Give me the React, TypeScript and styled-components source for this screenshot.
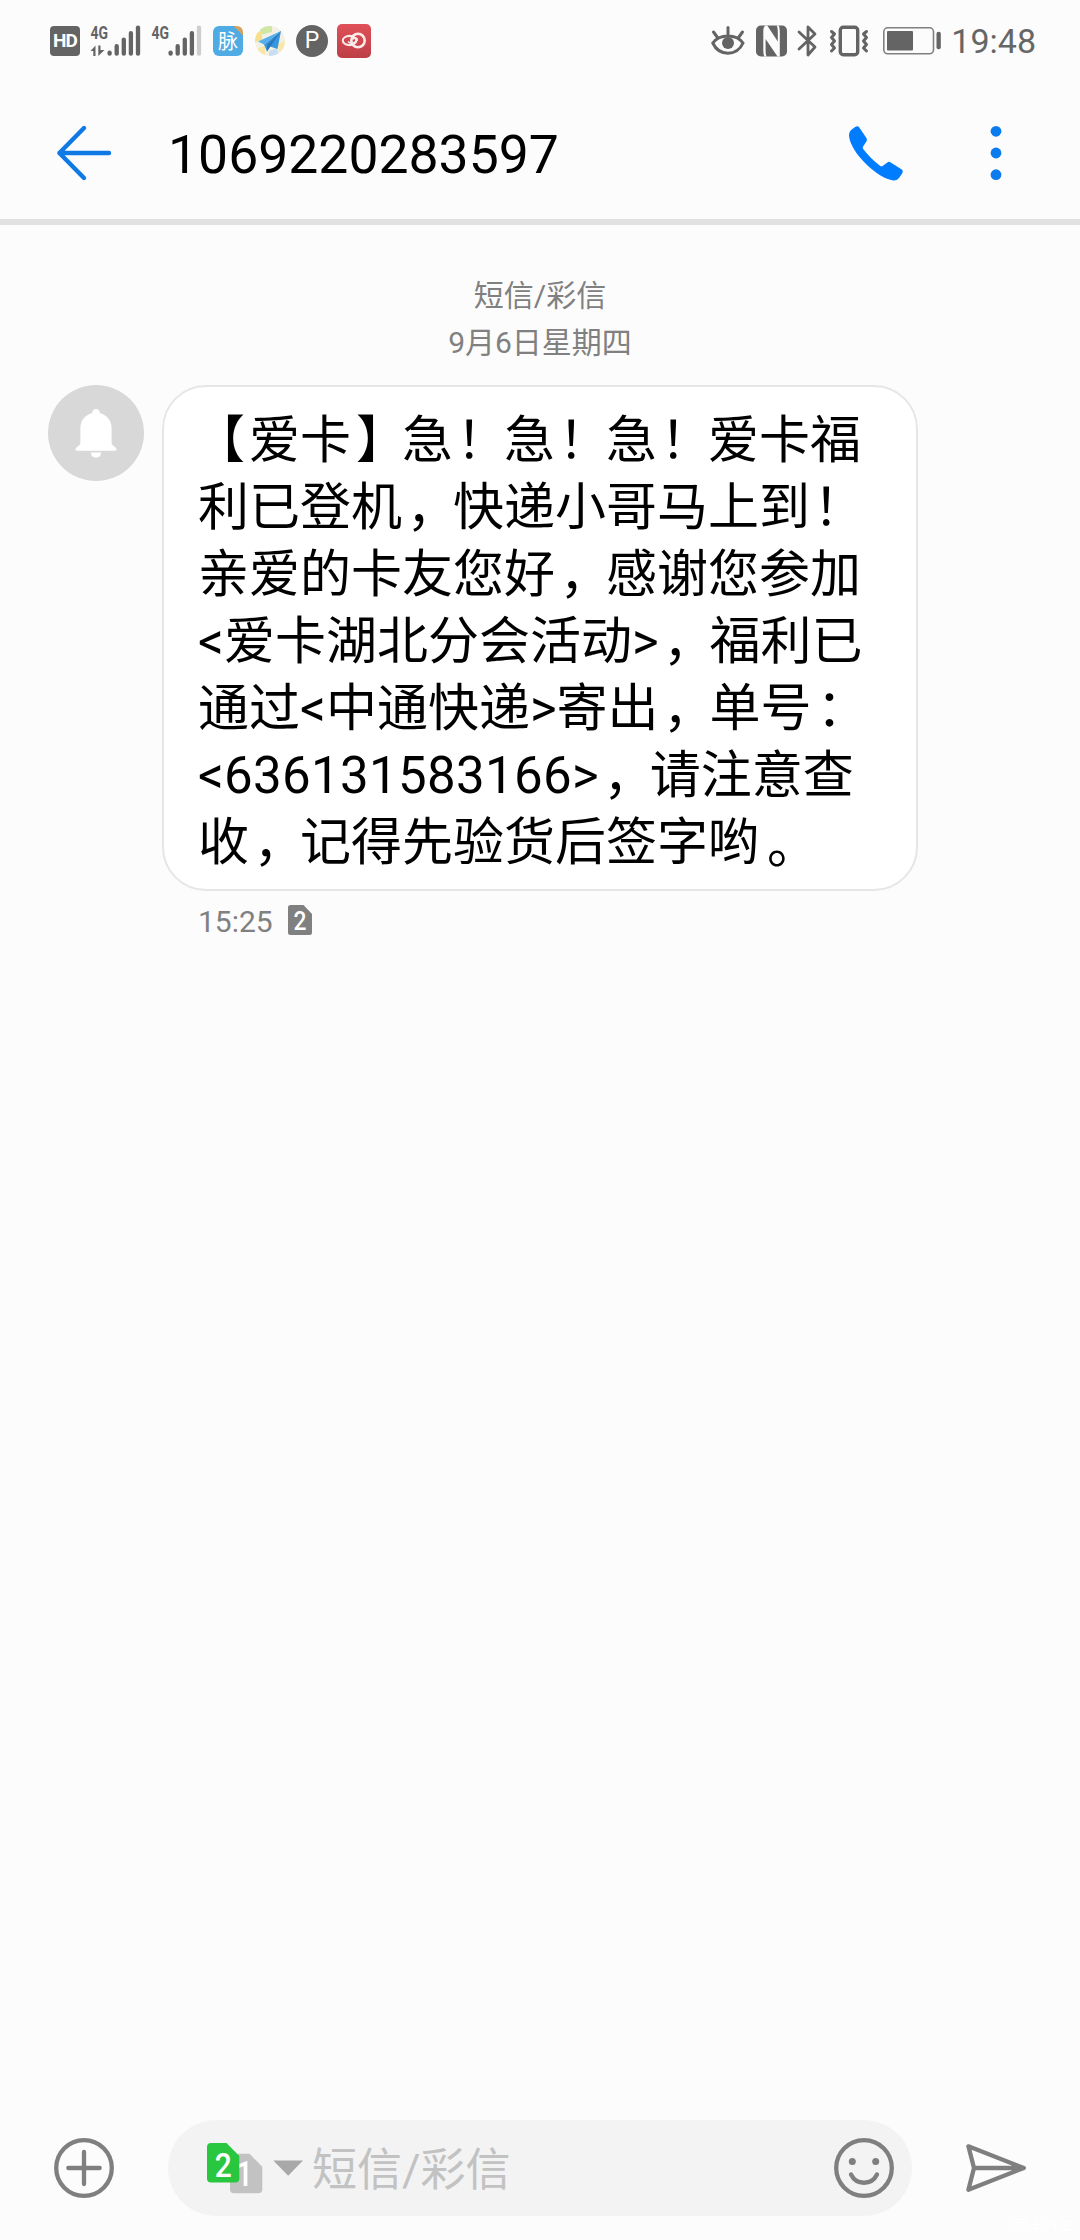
import React from 'react';
import styled, { createGlobalStyle } from 'styled-components';

const GREY = '#646464';
const MID = '#7f7f7f';
const BLUE = '#007dff';
const FONT = `Roboto, "Noto Sans CJK SC", sans-serif`;

const GlobalStyle = createGlobalStyle`
  * { box-sizing: border-box; }
  body { margin: 0; background: #fcfcfc; }
  svg { display: block; flex: none; overflow: visible; }
`;

const Screen = styled.div`
  display: flex;
  flex-direction: column;
  width: 1080px;
  height: 2240px;
  background: #fcfcfc;
  font-family: ${FONT};
  overflow: hidden;
`;

const StatusBar = styled.header`
  display: flex;
  align-items: center;
  justify-content: space-between;
  height: 82px;
  padding: 0 44px 0 50px;
`;

const StatusGroup = styled.div`
  display: flex;
  align-items: center;
`;

const Gap = styled.span<{ $w: number }>`
  flex: none;
  width: ${(p) => p.$w}px;
`;

const HdBadge = styled.span`
  display: flex;
  align-items: center;
  justify-content: center;
  width: 30px;
  height: 30px;
  border-radius: 4px;
  background: ${GREY};
  color: #fff;
  font: 700 19px/30px Roboto, sans-serif;
  letter-spacing: -0.8px;
`;

const AppBadge = styled.span`
  display: flex;
  align-items: center;
  justify-content: center;
  width: 30px;
  height: 30px;
  border-radius: 6px;
  background: linear-gradient(45deg, #4fabe4 84%, #d3a25f 84%);
  color: #fff;
  font: 400 20px/30px "Noto Sans CJK SC", sans-serif;
`;

const ParkingBadge = styled.span`
  display: flex;
  align-items: center;
  justify-content: center;
  width: 32px;
  height: 32px;
  border-radius: 50%;
  background: ${GREY};
  color: #fff;
  font: 400 23px/32px Roboto, sans-serif;
`;

const Clock = styled.span`
  color: #666;
  font: 400 34px/40px Roboto, sans-serif;
`;

const TitleBar = styled.div`
  display: flex;
  align-items: center;
  height: 143px;
  padding: 4px 78px 0 56px;
  border-bottom: 6px solid #e1e1e1;
`;

const Title = styled.h1`
  flex: 1;
  margin: 4px 0 0 56px;
  color: #000;
  font: 400 53.5px/64px Roboto, sans-serif;
`;

const Thread = styled.main`
  flex: 1;
  display: flex;
  flex-direction: column;
  padding-top: 47px;
`;

const Stamp = styled.div`
  color: #808080;
  text-align: center;
  font-size: 30px;
  line-height: 47px;
`;

const MessageRow = styled.div`
  display: flex;
  align-items: flex-start;
  gap: 18px;
  margin-top: 19px;
  padding-left: 48px;
`;

const Avatar = styled.div`
  display: flex;
  align-items: center;
  justify-content: center;
  width: 96px;
  height: 96px;
  border-radius: 50%;
  background: #d8d8d8;
`;

const Bubble = styled.div`
  width: 756px;
  height: 506px;
  padding: 20px 34px 0;
  border: 2px solid #e6e6e6;
  border-radius: 44px;
  background: #fff;
  color: #000;
  font-size: 51px;
  line-height: 67px;
  white-space: nowrap;
`;

const Line = styled.div`
  height: 67px;
`;

const Mark = styled.span<{ $x: number; $y: number }>`
  display: inline-block;
  width: 51px;
  text-spacing-trim: space-all;
  transform: translate(${(p) => p.$x}px, ${(p) => p.$y}px);
`;

const Digits = styled.span`
  letter-spacing: 0.35px;
`;

const Meta = styled.div`
  display: flex;
  align-items: center;
  gap: 15px;
  margin: 9px 0 0 198px;
  height: 40px;
  color: #808080;
  font: 400 30px/40px Roboto, sans-serif;
`;

const MetaTime = styled.span`
  padding-top: 3px;
`;

const Composer = styled.footer`
  display: flex;
  align-items: center;
  height: 96px;
  padding-left: 54px;
`;

const Field = styled.div`
  display: flex;
  align-items: center;
  width: 744px;
  height: 96px;
  margin-left: 54px;
  padding: 0 18px 0 39px;
  border-radius: 48px;
  background: #f3f3f3;
`;

const Placeholder = styled.span`
  flex: 1;
  margin-left: 9px;
  padding-top: 6px;
  color: #c2c2c2;
  font-size: 45px;
  line-height: 60px;
`;

const Footnote = styled.div`
  display: flex;
  justify-content: flex-end;
  height: 24px;
  padding-right: 7px;
  color: #fff;
  font-size: 15px;
  line-height: 20px;
`;

const svgText = { fontFamily: 'Roboto, sans-serif' };

function Signal({ data, weak }: { data?: boolean; weak?: boolean }) {
  const tops = [26, 19.5, 13, 6.5, 1];
  return (
    <svg width="51" height="32" viewBox="0 0 51 32">
      <text x="0.5" y="13.6" fontSize="18" fontWeight="700" fill={GREY} textLength="17.5" lengthAdjust="spacingAndGlyphs" {...svgText}>4G</text>
      {data && (
        <>
          <path d="M0.5 26 L5.5 20.5 V31 H3.3 V26Z" fill={GREY} />
          <path d="M8.3 20.5 H10.5 V25 H14.5 L8.3 31Z" fill={GREY} />
        </>
      )}
      {tops.map((t, i) => (
        <line key={t} x1={19.6 + i * 7.1} x2={19.6 + i * 7.1} y1={t + 1.6} y2={28.7}
          stroke={weak && i === 4 ? '#cecece' : GREY} strokeWidth="4.3" strokeLinecap="round" />
      ))}
    </svg>
  );
}

function PlaneIcon() {
  return (
    <svg width="30" height="30" viewBox="0 0 30 30">
      <defs><clipPath id="mapDisc"><circle cx="15" cy="15" r="15" /></clipPath></defs>
      <g clipPath="url(#mapDisc)">
        <rect width="30" height="30" fill="#f3f1e4" />
        <path d="M5 0H17V6L5 9Z" fill="#cfe6a4" />
        <path d="M0 7L7 5V14L0 16Z" fill="#f8df8b" />
        <path d="M14 25L22 22L24 30H14Z" fill="#c8def5" />
        <path d="M3 22L10 20V30H3Z" fill="#f8e7a8" />
        <path d="M23 18L30 15V24L24 26Z" fill="#f8e7a8" />
      </g>
      <path d="M26 5L3 15.5L9 18.5Z" fill="#58aeea" />
      <path d="M26 5L9 18.5L12 25.5L15 20.5L22.5 23Z" fill="#3896de" />
      <path d="M26 5L12 19L12 25.5Z" fill="#2679bd" />
    </svg>
  );
}

function RingsIcon() {
  return (
    <svg width="34" height="34" viewBox="0 0 34 34">
      <defs>
        <linearGradient id="redTile" x1="0" y1="0" x2="0" y2="1">
          <stop offset="0" stopColor="#e05058" /><stop offset="1" stopColor="#bd3f46" />
        </linearGradient>
      </defs>
      <rect width="34" height="34" rx="5" fill="url(#redTile)" />
      <g fill="none" stroke="#fbe9e9">
        <ellipse cx="12.5" cy="16.5" rx="6.7" ry="4.6" strokeWidth="2.1" />
        <circle cx="21" cy="16.5" r="6.7" strokeWidth="2.6" />
        <path d="M11 17.5C13 20 18 19.5 20 16.5C21.5 14 17 13 15.5 15.5" strokeWidth="1.6" />
      </g>
    </svg>
  );
}

function EyeIcon() {
  return (
    <svg width="34" height="32" viewBox="0 0 34 32" fill="none" stroke={GREY} strokeWidth="3" strokeLinecap="round">
      <path d="M1.8 18C8.500 8.500 25.500 8.500 32 18C26 31.500 8 31.500 1.8 18Z" />
      <circle cx="17" cy="18" r="6" fill={GREY} stroke="none" />
      <path d="M17 2.500V9M2.500 7L6.500 12.500M31.500 7L27.500 12.500" />
    </svg>
  );
}

function NfcIcon() {
  return (
    <svg width="31" height="32" viewBox="0 0 31 32">
      <rect y="0.5" width="31" height="31" rx="5" fill={GREY} />
      <path d="M9.300 0.500H11.200L21.800 16.500V7C21.800 4 21.500 2 20.600 0.500H22.700C23.600 2.500 23.800 5 23.800 8V31.500H21.500L9.600 14V24C9.600 28 9.800 30 10.700 31.500H8.400C7.500 29.500 7.300 27 7.300 24V6C7.300 3.500 8 1.500 9.300 0.500Z" fill="#fcfcfc" />
      <path d="M10.500 9L20.500 24V21.500L10.500 5Z" fill="#fcfcfc" />
    </svg>
  );
}

function BluetoothIcon() {
  return (
    <svg width="20" height="32" viewBox="0 0 20 32" fill="none" stroke={GREY} strokeWidth="2.8" strokeLinejoin="round" strokeLinecap="round">
      <path d="M2 7L18 22L11 30V2L18 9L2 24" />
    </svg>
  );
}

function VibrateIcon() {
  return (
    <svg width="40" height="32" viewBox="0 0 40 32" fill="none" stroke={GREY} strokeWidth="3" strokeLinejoin="round" strokeLinecap="round">
      <rect x="11.3" y="2.2" width="17.4" height="27.6" rx="3" strokeWidth="3.4" />
      <path d="M2.5 6.5L5.5 9L2.5 12.5L5.5 16L2.5 19.5L5.5 23L2.5 26" />
      <path d="M37.5 6.5L34.5 9L37.5 12.5L34.5 16L37.5 19.5L34.5 23L37.5 26" />
    </svg>
  );
}

function BatteryIcon() {
  return (
    <svg width="58" height="28" viewBox="0 0 58 28">
      <rect x="0.8" y="0.8" width="49.7" height="26" rx="4" fill="none" stroke="#808080" strokeWidth="1.6" />
      <rect x="4" y="4" width="26" height="19.5" rx="1" fill={GREY} />
      <rect x="53.5" y="4.7" width="4.3" height="17.6" rx="2" fill={GREY} />
    </svg>
  );
}

function BackIcon() {
  return (
    <svg width="56" height="56" viewBox="0 0 56 56" fill="none" stroke="#0f7ae6" strokeWidth="4.4" strokeLinecap="round" strokeLinejoin="round">
      <path d="M28 3L3.4 28L28 53M3.4 28H53" />
    </svg>
  );
}

function PhoneIcon() {
  return (
    <svg width="54" height="54" viewBox="0 0 54 54">
      <path d="M6.5 0.8Q8.8 -0.6 10.3 1.4L17.4 12Q18.6 13.8 17.4 15.6L14.1 20.4Q13.3 21.6 14 22.7C19 29.5 24.8 35 31 39.7Q32.3 40.7 33.6 39.9L38.7 36.3Q40.2 35.4 41.7 36.4L52.8 43.6Q54.6 45 53.4 47L50.2 51.8Q48.3 54.7 44.5 54.4C29 53 1 26.5 0 9.5Q-0.1 5.6 3 3.2Z" fill={BLUE} />
    </svg>
  );
}

function MoreIcon() {
  return (
    <svg width="12" height="56" viewBox="0 0 12 56" fill="#0b7cf0">
      <circle cx="6" cy="6.3" r="5.4" /><circle cx="6" cy="28" r="5.4" /><circle cx="6" cy="49.7" r="5.4" />
    </svg>
  );
}

function BellIcon() {
  return (
    <svg width="42" height="49" viewBox="0 0 42 49" fill="#fff">
      <path d="M21 0C23.4 0 24.8 1.8 25 4.2C32 6 36.6 11.6 36.6 19V33.5Q36.6 35 37.8 36.2L41 39Q42.4 41.8 40 41.8H2Q-0.4 41.8 1 39L4.2 36.2Q5.4 35 5.4 33.5V19C5.4 11.6 10 6 17 4.2C17.2 1.8 18.6 0 21 0Z" />
      <path d="M15.8 43.5H26.2C26.2 46.5 24 48.7 21 48.7S15.8 46.5 15.8 43.5Z" />
    </svg>
  );
}

function SimIcon() {
  return (
    <svg width="24" height="30" viewBox="0 0 24 30">
      <path d="M2.5 0H15.5L24 9V27.500Q24 30 21.5 30H2.5Q0 30 0 27.5V2.5Q0 0 2.5 0Z" fill="#808080" />
      <text x="12" y="24.7" fontSize="25.500" fontWeight="500" fill="#fff" textAnchor="middle" textLength="13" lengthAdjust="spacingAndGlyphs" {...svgText}>2</text>
    </svg>
  );
}

function SimPicker() {
  const card = 'M4 0H19.5L32.3 13V35.5Q32.3 39.5 28.3 39.5H4Q0 39.5 0 35.5V4Q0 0 4 0Z';
  return (
    <svg width="96" height="50" viewBox="0 0 96 50">
      <g transform="translate(23 10.8)">
        <path d={card} fill="#c2c2c2" />
        <text x="14.5" y="32.500" fontSize="35" fontWeight="500" fill="#fff" textAnchor="middle" textLength="17" lengthAdjust="spacingAndGlyphs" {...svgText}>1</text>
      </g>
      <path d={card} fill="#29c63f" />
      <text x="16.300" y="33.500" fontSize="34" fontWeight="500" fill="#fff" textAnchor="middle" textLength="17" lengthAdjust="spacingAndGlyphs" {...svgText}>2</text>
      <path d="M66.3 17.5H96L81.2 32.7Z" fill="#a8a8a8" />
    </svg>
  );
}

function PlusIcon() {
  return (
    <svg width="60" height="60" viewBox="0 0 60 60" fill="none" stroke={MID} strokeWidth="4.3" strokeLinecap="round">
      <circle cx="30" cy="30" r="27.8" />
      <path d="M14.3 30H45.7M30 14V46" />
    </svg>
  );
}

function SmileIcon() {
  return (
    <svg width="60" height="60" viewBox="0 0 60 60" fill="none" stroke={MID} strokeWidth="4.3" strokeLinecap="round">
      <circle cx="30" cy="30" r="27.8" />
      <path d="M17 36.5C22.5 47.5 37.5 47.5 43 36.5" />
      <g fill={MID} stroke="none"><circle cx="18.3" cy="23.5" r="3.5" /><circle cx="41.7" cy="23.5" r="3.5" /></g>
    </svg>
  );
}

function SendIcon() {
  return (
    <svg width="60" height="48" viewBox="0 0 60 48" fill="none" stroke={MID} strokeWidth="4.3" strokeLinecap="round" strokeLinejoin="round">
      <path d="M2.4 2.3L57.8 24L2.4 45.7L8 24ZM8 24H57" />
    </svg>
  );
}

const LINES = [
  '【爱卡】急！急！急！爱卡福',
  '利已登机，快递小哥马上到！',
  '亲爱的卡友您好，感谢您参加',
  '<爱卡湖北分会活动>，福利已',
  '通过<中通快递>寄出，单号：',
  '<636131583166>，请注意查',
  '收，记得先验货后签字哟。',
];

const MARK_SHIFT: Record<string, [number, number]> = {
  '【': [-4, 0],
  '】': [5, 0],
  '！': [3.5, 0],
  '，': [4.5, 1],
  '：': [5, 0],
  '。': [8, 3],
};

function MessageText({ text }: { text: string }) {
  return (
    <Line>
      {text.split(/([【】！，：。]|\d+)/).filter(Boolean).map((part, i) => {
        const shift = MARK_SHIFT[part];
        if (shift) return <Mark key={i} $x={shift[0]} $y={shift[1]}>{part}</Mark>;
        if (/^\d/.test(part)) return <Digits key={i}>{part}</Digits>;
        return part;
      })}
    </Line>
  );
}

export default function App() {
  return (
    <>
      <GlobalStyle />
      <Screen>
        <StatusBar>
          <StatusGroup>
            <HdBadge>HD</HdBadge>
            <Gap $w={10} />
            <Signal data />
            <Gap $w={10} />
            <Signal weak />
            <Gap $w={11} />
            <AppBadge>脉</AppBadge>
            <Gap $w={12} />
            <PlaneIcon />
            <Gap $w={11} />
            <ParkingBadge>P</ParkingBadge>
            <Gap $w={9} />
            <RingsIcon />
          </StatusGroup>
          <StatusGroup>
            <EyeIcon />
            <Gap $w={11} />
            <NfcIcon />
            <Gap $w={10} />
            <BluetoothIcon />
            <Gap $w={12} />
            <VibrateIcon />
            <Gap $w={14} />
            <BatteryIcon />
            <Gap $w={10} />
            <Clock>19:48</Clock>
          </StatusGroup>
        </StatusBar>
        <TitleBar>
          <BackIcon />
          <Title>1069220283597</Title>
          <PhoneIcon />
          <Gap $w={87} />
          <MoreIcon />
        </TitleBar>
        <Thread>
          <Stamp>短信/彩信</Stamp>
          <Stamp>9月6日星期四</Stamp>
          <MessageRow>
            <Avatar><BellIcon /></Avatar>
            <Bubble>{LINES.map((t) => <MessageText key={t} text={t} />)}</Bubble>
          </MessageRow>
          <Meta><MetaTime>15:25</MetaTime><SimIcon /></Meta>
        </Thread>
        <Composer>
          <PlusIcon />
          <Field>
            <SimPicker />
            <Placeholder>短信/彩信</Placeholder>
            <SmileIcon />
          </Field>
          <Gap $w={54} />
          <SendIcon />
        </Composer>
        <Footnote>爱卡汽车</Footnote>
      </Screen>
    </>
  );
}
